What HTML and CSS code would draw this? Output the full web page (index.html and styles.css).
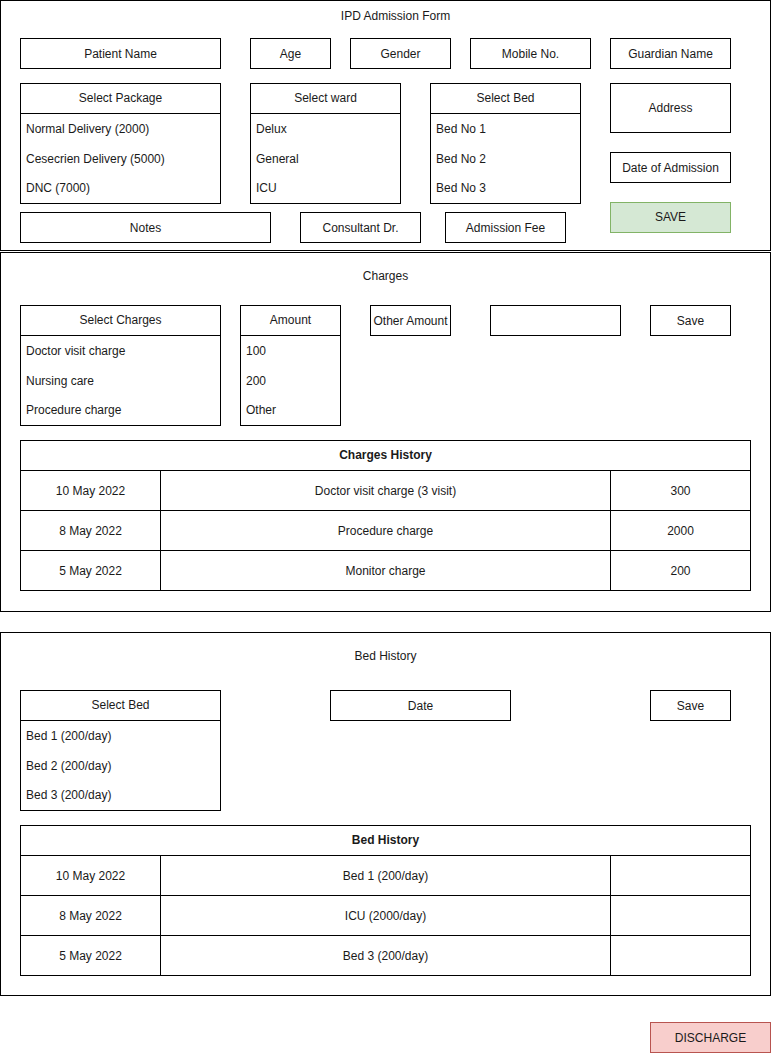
FILE: index.html
```html
<!DOCTYPE html>
<html lang="en">
<head>
  <meta charset="UTF-8" />
  <meta name="viewport" content="width=device-width, initial-scale=1.0"/>
  <title>IPD Admission Form</title>
  <link rel="stylesheet" href="styles.css">
</head>
<body>
  <!-- Admission details -->
  <section class="panel panel-admission">
    <div class="panel-title title-admission">IPD Admission Form</div>

    <div class="row row-basic">
      <div class="box w200">Patient Name</div>
      <div class="box w80 push-10">Age</div>
      <div class="box w100">Gender</div>
      <div class="box w120">Mobile No.</div>
      <div class="box w120">Guardian Name</div>
    </div>

    <div class="row row-main">
      <div class="main-left">
        <div class="row gap-30">
          <div class="list w200">
            <div class="list-head">Select Package</div>
            <div class="list-item">Normal Delivery (2000)</div>
            <div class="list-item">Cesecrien Delivery (5000)</div>
            <div class="list-item">DNC (7000)</div>
          </div>
          <div class="list w150">
            <div class="list-head">Select ward</div>
            <div class="list-item">Delux</div>
            <div class="list-item">General</div>
            <div class="list-item">ICU</div>
          </div>
          <div class="list w150">
            <div class="list-head">Select Bed</div>
            <div class="list-item">Bed No 1</div>
            <div class="list-item">Bed No 2</div>
            <div class="list-item">Bed No 3</div>
          </div>
        </div>
        <div class="row row-notes">
          <div class="box w250">Notes</div>
          <div class="box w120 ml-30">Consultant Dr.</div>
          <div class="box w120 ml-25">Admission Fee</div>
        </div>
      </div>

      <div class="main-right">
        <div class="box w120 address">Address</div>
        <div class="box w120">Date of Admission</div>
        <div class="box w120 btn-save">SAVE</div>
      </div>
    </div>
  </section>

  <!-- Charges -->
  <section class="panel panel-charges">
    <div class="panel-title">Charges</div>

    <div class="row">
      <div class="list w200">
        <div class="list-head">Select Charges</div>
        <div class="list-item">Doctor visit charge</div>
        <div class="list-item">Nursing care</div>
        <div class="list-item">Procedure charge</div>
      </div>
      <div class="list w100 ml-20">
        <div class="list-head">Amount</div>
        <div class="list-item">100</div>
        <div class="list-item">200</div>
        <div class="list-item">Other</div>
      </div>
      <div class="box w80 ml-30">Other Amount</div>
      <div class="box w130 ml-40"></div>
      <div class="box w80 ml-30">Save</div>
    </div>

    <div class="history">
      <div class="history-head">Charges History</div>
      <div class="history-row">
        <div class="cell">10 May 2022</div>
        <div class="cell">Doctor visit charge (3 visit)</div>
        <div class="cell">300</div>
      </div>
      <div class="history-row">
        <div class="cell">8 May 2022</div>
        <div class="cell">Procedure charge</div>
        <div class="cell">2000</div>
      </div>
      <div class="history-row">
        <div class="cell">5 May 2022</div>
        <div class="cell">Monitor charge</div>
        <div class="cell">200</div>
      </div>
    </div>
  </section>

  <!-- Bed history -->
  <section class="panel panel-beds">
    <div class="panel-title">Bed History</div>

    <div class="row">
      <div class="list w200">
        <div class="list-head">Select Bed</div>
        <div class="list-item">Bed 1 (200/day)</div>
        <div class="list-item">Bed 2 (200/day)</div>
        <div class="list-item">Bed 3 (200/day)</div>
      </div>
      <div class="box w180 ml-110">Date</div>
      <div class="box w80 ml-140">Save</div>
    </div>

    <div class="history">
      <div class="history-head">Bed History</div>
      <div class="history-row">
        <div class="cell">10 May 2022</div>
        <div class="cell">Bed 1 (200/day)</div>
        <div class="cell"></div>
      </div>
      <div class="history-row">
        <div class="cell">8 May 2022</div>
        <div class="cell">ICU (2000/day)</div>
        <div class="cell"></div>
      </div>
      <div class="history-row">
        <div class="cell">5 May 2022</div>
        <div class="cell">Bed 3 (200/day)</div>
        <div class="cell"></div>
      </div>
    </div>
  </section>

  <div class="footer">
    <div class="box w120 btn-discharge">DISCHARGE</div>
  </div>
</body>
</html>
```

FILE: styles.css
```css
* {
  box-sizing: border-box;
}

body {
  margin: 0;
  font-family: "Liberation Sans", Arial, sans-serif;
  font-size: 12px;
  color: #1a1a1a;
  background: #ffffff;
  width: 772px;
}

/* Panels (one per block of the form) */
.panel {
  width: 771px;
  border: 1px solid #000;
  padding: 0 19px;
}

.panel-admission {
  height: 251px;
}

.panel-charges {
  height: 360px;
  margin-top: 1px;
}

.panel-beds {
  height: 364px;
  margin-top: 20px;
}

.panel-title {
  text-align: center;
  line-height: 47px;
  margin-bottom: 5px;
}

.panel-beds .panel-title {
  margin-bottom: 10px;
}

.title-admission {
  line-height: 31px;
  height: 37px;
  margin: 0;
  padding-left: 20px;
}

/* Rows */
.row {
  display: flex;
  align-items: flex-start;
}

.row-basic {
  gap: 19px;
}

.row-main {
  margin-top: 14px;
}

.main-left {
  width: 561px;
  display: flex;
  flex-direction: column;
}

.main-right {
  margin-left: 29px;
  display: flex;
  flex-direction: column;
  gap: 19px;
}

.row-notes {
  margin-top: 8px;
}

.gap-30 { gap: 29px; }
.push-10 { margin-left: 10px; }
.ml-20 { margin-left: 19px; }
.ml-25 { margin-left: 24px; }
.ml-30 { margin-left: 29px; }
.ml-40 { margin-left: 39px; }
.ml-110 { margin-left: 109px; }
.ml-140 { margin-left: 139px; }

/* Widths follow the wireframe sizes (+1 for the border) */
.w80 { width: 81px; }
.w100 { width: 101px; }
.w120 { width: 121px; }
.w130 { width: 131px; }
.w150 { width: 151px; }
.w180 { width: 181px; }
.w200 { width: 201px; }
.w250 { width: 251px; }

/* Plain input-like box */
.box {
  height: 31px;
  border: 1px solid #000;
  display: flex;
  align-items: center;
  justify-content: center;
  white-space: nowrap;
  flex-shrink: 0;
}

.box.address {
  height: 50px;
}

.btn-save {
  background: #d5e8d4;
  border-color: #82b366;
  align-items: flex-start;
  padding-top: 7px;
}

/* Dropdown style lists */
.list {
  height: 121px;
  border: 1px solid #000;
  display: flex;
  flex-direction: column;
  flex-shrink: 0;
}

.list-head {
  height: 30px;
  line-height: 29px;
  text-align: center;
  border-bottom: 1px solid #000;
}

.list-item {
  flex: 1;
  display: flex;
  align-items: center;
  padding-left: 5px;
  white-space: nowrap;
}

/* History tables */
.history {
  width: 731px;
  border: 1px solid #000;
  margin-top: 14px;
}

.history-head {
  height: 30px;
  line-height: 29px;
  text-align: center;
  font-weight: bold;
  border-bottom: 1px solid #000;
}

.history-row {
  display: grid;
  grid-template-columns: 139px 450px 140px;
  height: 39px;
}

.history-row + .history-row {
  height: 40px;
  border-top: 1px solid #000;
}

.cell {
  display: flex;
  align-items: center;
  justify-content: center;
}

.cell + .cell {
  border-left: 1px solid #000;
}

/* Footer action */
.footer {
  padding: 26px 0 0 650px;
}

.btn-discharge {
  background: #f8cecc;
  border-color: #b85450;
}
```
